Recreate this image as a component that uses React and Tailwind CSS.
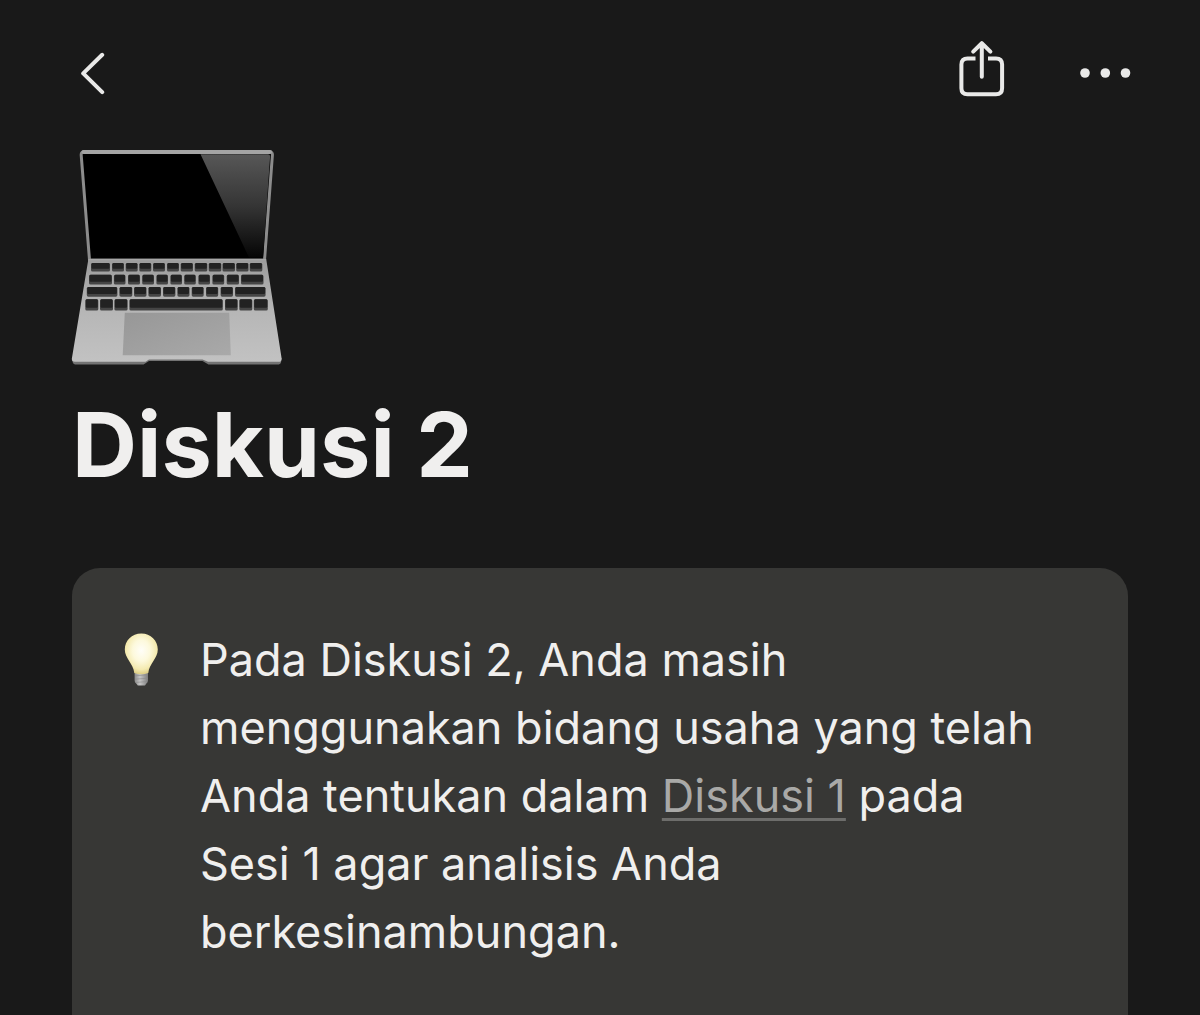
import React from "react";

// each key is [left, right], rows go from top to bottom of the keyboard
const keyRows = [
  {
    y: 263,
    height: 8.5,
    keys: [[91, 110], [112, 124], [125.7, 137.7], [139.3, 151.3], [153, 165], [167, 179], [180.7, 193], [194.7, 207.3], [208.7, 221.3], [222.5, 235], [236.2, 248.5], [249.7, 262.3]],
  },
  {
    y: 274.8,
    height: 9.7,
    keys: [[89, 112], [113.9, 125.5], [128, 140], [142.2, 154], [156.4, 168], [170.4, 182], [184.2, 195.8], [198.4, 210], [212.4, 224.2], [226.7, 239], [241, 263.5]],
  },
  {
    y: 287,
    height: 9.7,
    keys: [[86.8, 117.4], [119.4, 132.3], [134, 146.5], [148.4, 161], [163, 175.4], [177.4, 189.5], [191.7, 203.7], [206, 218.2], [220.6, 233], [235, 265.6]],
  },
  {
    y: 299.2,
    height: 11.3,
    keys: [[85.3, 98.3], [100, 113], [114.4, 127.6], [129.4, 222.8], [225, 237.7], [239.3, 252.3], [253.8, 267.8]],
  },
];

function LaptopIcon() {
  return (
    <svg viewBox="70 148 214 218" className="w-[214px] h-[218px]" role="img" aria-label="Laptop">
      <defs>
        <linearGradient id="glare" x1="0" y1="0" x2="0" y2="1">
          <stop offset="0" stopColor="#575757" />
          <stop offset="0.5" stopColor="#353535" />
          <stop offset="1" stopColor="#050505" />
        </linearGradient>
        <linearGradient id="body" x1="0" y1="0" x2="0" y2="1">
          <stop offset="0" stopColor="#9c9c9c" />
          <stop offset="0.5" stopColor="#b6b6b6" />
          <stop offset="1" stopColor="#c2c2c2" />
        </linearGradient>
        <linearGradient id="pad" x1="0" y1="0" x2="1" y2="1">
          <stop offset="0" stopColor="#979797" />
          <stop offset="1" stopColor="#a9a9a9" />
        </linearGradient>
      </defs>
      {/* Screen */}
      <path
        d="M84 151.8H269.5Q272.7 151.8 272.4 155.2L264.5 260H89.5L81.2 155.2Q81 151.8 84 151.8Z"
        fill="#000"
        stroke="#8c8c8c"
        strokeWidth="3"
      />
      <path d="M83.5 152H270" stroke="#a4a4a4" strokeWidth="4" strokeLinecap="round" />
      <path d="M200.5 154.2H268Q270.3 154.2 270.1 156.5L263 257.5H249Z" fill="url(#glare)" />
      {/* Base */}
      <path
        d="M71.9 359L72.8 362.6Q73.2 364.4 75 364.4H143.5L149 361H202.5L208.5 364.4H278.8Q280.6 364.4 281 362.6L281.6 358Z"
        fill="#737373"
      />
      <path
        d="M88.4 259H266.2L281.6 358.2Q281.8 361.8 279 361.8H208L202.5 359.6H149L145.5 361.8H74.8Q71.4 361.8 71.9 358.2Z"
        fill="url(#body)"
      />
      <path d="M88.5 259.6H266" stroke="#a6a6a6" strokeWidth="1.4" />
      {keyRows.map((row) =>
        row.keys.map(([left, right]) => (
          <g key={`${row.y}-${left}`}>
            <rect x={left} y={row.y} width={right - left} height={row.height} rx="1.6" fill="#454545" />
            <rect x={left + 0.5} y={row.y} width={right - left - 1} height={row.height - 2.8} rx="1.2" fill="#222" />
          </g>
        ))
      )}
      <path d="M124.8 312.8H229.2L230.8 355.2H122.7Z" fill="url(#pad)" />
    </svg>
  );
}

function BulbIcon() {
  return (
    <svg viewBox="124 632 36 56" className="w-9 h-14 shrink-0" role="img" aria-label="Tip">
      <defs>
        <radialGradient id="glow" cx="0.5" cy="0.42" r="0.58">
          <stop offset="0" stopColor="#fffef8" />
          <stop offset="0.45" stopColor="#fdf9dc" />
          <stop offset="0.8" stopColor="#f4eab0" />
          <stop offset="1" stopColor="#dccd84" />
        </radialGradient>
        <linearGradient id="cap" x1="0" y1="0" x2="1" y2="0">
          <stop offset="0" stopColor="#8b8b8b" />
          <stop offset="0.4" stopColor="#c6c6c6" />
          <stop offset="1" stopColor="#7d7d7d" />
        </linearGradient>
      </defs>
      <path d="M134.6 672H148V680.5Q148 682.6 146.4 683.4L145 685.4H137.8L136.2 683.4Q134.6 682.6 134.6 680.5Z" fill="url(#cap)" />
      <path d="M135 675.8L147.8 674.8M135 679.2L147.8 678.2M136 682.4L147 681.6" stroke="#8a8a8a" strokeWidth="0.6" />
      <path
        d="M141.3 633.5C150.8 633.5 157.8 640.6 157.8 649.6C157.8 658.5 149.3 663.5 148.3 673Q141.3 675.4 134.3 673C133.3 663.5 124.8 658.5 124.8 649.6C124.8 640.6 131.8 633.5 141.3 633.5Z"
        fill="url(#glow)"
      />
    </svg>
  );
}

function Header() {
  return (
    <header className="flex items-center justify-between pl-20 pr-[69px] pt-10">
      <button type="button" aria-label="Back">
        <svg viewBox="0 0 26 52" className="w-[26px] h-[52px]" fill="none" stroke="#e9e9e8" strokeWidth="4" strokeLinecap="round" strokeLinejoin="round">
          <path d="M22.2 11.8L3.2 30.4L22.2 49.2" />
        </svg>
      </button>
      <div className="flex items-center gap-[73px]">
        <button type="button" aria-label="Share">
          <svg viewBox="0 0 48 58" className="w-12 h-[58px]" fill="none" stroke="#e9e9e8" strokeWidth="4" strokeLinecap="round" strokeLinejoin="round">
            <path d="M17.5 18.4H9.5Q3.4 18.4 3.4 24.5V48.2Q3.4 54.3 9.5 54.3H38Q44.1 54.3 44.1 48.2V24.5Q44.1 18.4 38 18.4H30" strokeLinecap="butt" />
            <path d="M23.8 36.8V3.6M15.2 11.6L23.8 3.2L32.4 11.6" />
          </svg>
        </button>
        <button type="button" aria-label="More">
          <svg viewBox="0 0 52 20" className="w-[52px] h-5" fill="#e9e9e8">
            <circle cx="6" cy="14" r="4.8" />
            <circle cx="26.3" cy="14" r="4.8" />
            <circle cx="46.5" cy="14" r="4.8" />
          </svg>
        </button>
      </div>
    </header>
  );
}

function App() {
  return (
    <div className="min-h-screen flex flex-col bg-[#191919] text-[#f0efee] font-['Inter',sans-serif]">
      <Header />
      <main className="flex-1 flex flex-col px-[72px] pt-[50px]">
        <div className="-ml-0.5">
          <LaptopIcon />
        </div>
        <h1 className="mt-5 text-[90px] leading-[118px] font-bold">Diskusi 2</h1>

        {/* Callout */}
        <section className="mt-16 flex-1 flex items-start gap-10 rounded-t-[28px] bg-[#373735] pl-[52px] pr-20 pt-[58px]">
          <div className="pt-1.5">
            <BulbIcon />
          </div>
          <p className="text-[45px] leading-[68px]">
            Pada Diskusi 2, Anda masih menggunakan bidang usaha yang telah Anda tentukan dalam{" "}
            <a href="#diskusi-1" className="text-[#a9a9a7] underline decoration-[#6d6d6b] decoration-[3px] underline-offset-[6px]">
              Diskusi 1
            </a>{" "}
            pada Sesi 1 agar analisis Anda berkesinambungan.
          </p>
        </section>
      </main>
    </div>
  );
}

export default App;
